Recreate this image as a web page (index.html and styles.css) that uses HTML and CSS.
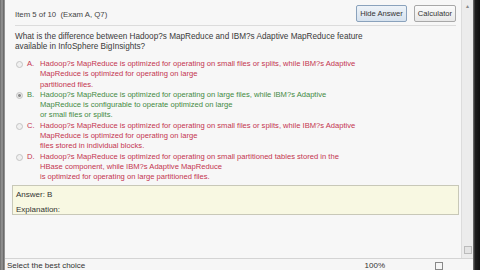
FILE: index.html
```html
<!DOCTYPE html>
<html lang="en">
<head>
    <meta charset="UTF-8">
    <title>Exam Item</title>
    <link rel="stylesheet" href="styles.css">
</head>
<body>

<div class="window">
    <div class="edge-left"></div>
    <div class="main">
        <div class="pane">
            <div class="content">
                <div class="topbar">
                    <span class="item-title">Item 5 of 10&nbsp; (Exam A, Q7)</span>
                    <div class="buttons">
                        <button class="btn active">Hide Answer</button>
                        <button class="btn">Calculator</button>
                    </div>
                </div>
                <p class="question">What is the difference between Hadoop?s MapReduce and IBM?s Adaptive MapReduce feature<br>available in InfoSphere BigInsights?</p>

                <div class="choices">
                    <div class="choice wrong">
                        <span class="radio"></span>
                        <span class="letter">A.</span>
                        <span class="text">Hadoop?s MapReduce is optimized for operating on small files or splits, while IBM?s Adaptive<br>MapReduce is optimized for operating on large<br>partitioned files.</span>
                    </div>
                    <div class="choice right">
                        <span class="radio checked"></span>
                        <span class="letter">B.</span>
                        <span class="text">Hadoop?s MapReduce is optimized for operating on large files, while IBM?s Adaptive<br>MapReduce is configurable to operate optimized on large<br>or small files or splits.</span>
                    </div>
                    <div class="choice wrong">
                        <span class="radio"></span>
                        <span class="letter">C.</span>
                        <span class="text">Hadoop?s MapReduce is optimized for operating on small files or splits, while IBM?s Adaptive<br>MapReduce is optimized for operating on large<br>files stored in individual blocks.</span>
                    </div>
                    <div class="choice wrong">
                        <span class="radio"></span>
                        <span class="letter">D.</span>
                        <span class="text">Hadoop?s MapReduce is optimized for operating on small partitioned tables stored in the<br>HBase component, while IBM?s Adaptive MapReduce<br>is optimized for operating on large partitioned files.</span>
                    </div>
                </div>

                <div class="answer">
                    <div>Answer: B</div>
                    <div class="explain">Explanation:</div>
                </div>
            </div>
            <div class="scrollbar">
                <span class="arrow">&#9652;</span>
                <span class="grip"></span>
            </div>
        </div>
        <div class="status">
            <span>Select the best choice</span>
            <span class="zoom">100%</span>
            <span class="box"></span>
        </div>
    </div>
    <div class="edge-right"></div>
</div>

</body>
</html>
```

FILE: styles.css
```css
body {
    margin: 0;
    padding: 0;
    font-family: "Liberation Sans", Arial, sans-serif;
    font-size: 8px;
    color: #333;
    background: #f6f6f6;
}
.window {
    display: flex;
    width: 480px;
    height: 270px;
    overflow: hidden;
}
.edge-left {
    width: 5px;
    background: linear-gradient(to right, #6a6a6a, #9a9a9a 40%, #5c5c5c 80%, #c8c8c8);
}
.edge-right {
    width: 7px;
    background: linear-gradient(to right, #7a7a7a, #1e1e1e 30%, #101010);
}
.main {
    flex: 1;
    display: flex;
    flex-direction: column;
}
.pane {
    flex: 1;
    display: flex;
    border-bottom: 1px solid #d4d4d4;
}
.content {
    flex: 1;
    background: #f7f7f7;
    padding: 5px 2px 0 7px;
}
.scrollbar {
    width: 11px;
    background: #ececec;
    border-left: 1px solid #dcdcdc;
    display: flex;
    flex-direction: column;
    justify-content: space-between;
    align-items: center;
    padding: 2px 0 4px;
}
.arrow {
    font-size: 6px;
    color: #888;
}
.grip {
    width: 6px;
    height: 6px;
    border: 1px solid #bbb;
    background: #e4e4e4;
}
.topbar {
    display: flex;
    justify-content: space-between;
    align-items: center;
    margin: 0 3px 0 3px;
    padding-bottom: 3px;
    border-bottom: 1px solid #dcdcdc;
}
.item-title {
    color: #444;
    font-size: 7.8px;
    padding-top: 2px;
}
.buttons {
    display: flex;
    gap: 7px;
}
.btn {
    font-family: inherit;
    font-size: 7.6px;
    color: #333;
    background: linear-gradient(#fbfbfb, #e8e8e8);
    border: 1px solid #a8a8a8;
    border-radius: 2px;
    padding: 2px 3px;
    height: 17px;
}
.btn.active {
    background: linear-gradient(#eef3f8, #d6e2ee);
    border-color: #8aa2bc;
}
.question {
    margin: 6px 0 0 3px;
    font-size: 8.2px;
    line-height: 10px;
    color: #3a3a3a;
}
.choices {
    margin: 7px 0 0 4px;
    font-size: 7.6px;
}
.choice {
    display: flex;
    align-items: flex-start;
    line-height: 10.3px;
}
.radio {
    width: 5px;
    height: 5px;
    border: 1px solid #c4c4c4;
    border-radius: 50%;
    background: #f0f0f0;
    margin: 2px 4px 0 0;
    flex: none;
}
.radio.checked {
    background: radial-gradient(circle, #8a8a8a 35%, #e8e8e8 45%);
}
.letter {
    width: 13px;
    flex: none;
}
.wrong {
    color: #c4354f;
}
.right {
    color: #438a43;
}
.answer {
    margin-top: 2px;
    background: #f8f8e2;
    border: 1px solid #c8c8b8;
    padding: 4px 3px 3px;
    height: 21px;
    line-height: 9px;
    color: #333;
}
.explain {
    margin-top: 6px;
}
.status {
    height: 8px;
    display: flex;
    align-items: flex-start;
    padding: 3px 0 0 2px;
    color: #333;
    line-height: 8px;
}
.zoom {
    margin-left: auto;
    margin-right: 50px;
}
.box {
    width: 6px;
    height: 6px;
    border: 1px solid #888;
    margin-right: 30px;
}
```
